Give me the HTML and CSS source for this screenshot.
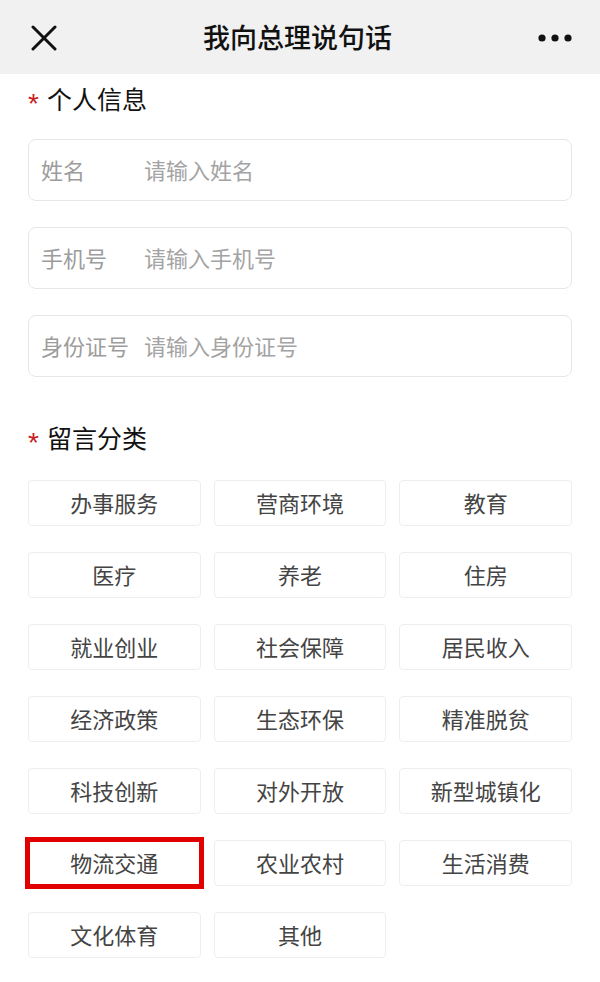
FILE: index.html
```html
<!DOCTYPE html>
<html lang="zh-CN">
<head>
<meta charset="utf-8">
<title>我向总理说句话</title>
<link rel="stylesheet" href="styles.css">
</head>
<body>
<header class="topbar">
  <span class="icon-close">
    <svg width="26" height="26" viewBox="0 0 26 26"><path d="M2 2 L24 24 M24 2 L2 24" stroke="#111" stroke-width="3" stroke-linecap="round" fill="none"/></svg>
  </span>
  <h1 class="title">我向总理说句话</h1>
  <span class="icon-more">
    <svg width="34" height="8" viewBox="0 0 34 8"><circle cx="4" cy="4" r="3.6" fill="#111"/><circle cx="17" cy="4" r="3.6" fill="#111"/><circle cx="30" cy="4" r="3.6" fill="#111"/></svg>
  </span>
</header>
<main class="content">
  <h2 class="section-title first"><span class="req">*</span>个人信息</h2>
  <div class="fields">
    <div class="field"><span class="label">姓名</span><span class="ph">请输入姓名</span></div>
    <div class="field"><span class="label">手机号</span><span class="ph">请输入手机号</span></div>
    <div class="field"><span class="label">身份证号</span><span class="ph">请输入身份证号</span></div>
  </div>
  <h2 class="section-title second"><span class="req">*</span>留言分类</h2>
  <div class="cats">
    <div class="cat">办事服务</div>
    <div class="cat">营商环境</div>
    <div class="cat">教育</div>
    <div class="cat">医疗</div>
    <div class="cat">养老</div>
    <div class="cat">住房</div>
    <div class="cat">就业创业</div>
    <div class="cat">社会保障</div>
    <div class="cat">居民收入</div>
    <div class="cat">经济政策</div>
    <div class="cat">生态环保</div>
    <div class="cat">精准脱贫</div>
    <div class="cat">科技创新</div>
    <div class="cat">对外开放</div>
    <div class="cat">新型城镇化</div>
    <div class="cat marked">物流交通<span class="mark"></span></div>
    <div class="cat">农业农村</div>
    <div class="cat">生活消费</div>
    <div class="cat">文化体育</div>
    <div class="cat">其他</div>
  </div>
</main>
</body>
</html>
```
FILE: styles.css
```css
* { box-sizing: border-box; }
html, body { margin: 0; padding: 0; background: #fff; }
body {
  font-family: "Noto Sans CJK SC", "Noto Sans", sans-serif;
  color: #111;
  width: 600px;
}
.topbar {
  height: 74px;
  background: #f1f1f1;
  display: flex;
  align-items: center;
  padding: 0 28px 0 31px;
}
.icon-close { width: 26px; height: 26px; display: flex; margin-top: 2px; }
.icon-more { width: 34px; height: 8px; display: flex; margin-top: 2px; }
.title {
  flex: 1;
  margin: 0;
  text-align: center;
  font-size: 27px;
  font-weight: 500;
  line-height: 34px;
  color: #111;
}
.content { padding: 0 28px; }
.section-title {
  margin: 0;
  height: 34px;
  font-size: 25px;
  font-weight: 400;
  line-height: 34px;
  color: #111;
  display: flex;
  align-items: center;
}
.section-title.first { margin-top: 7px; }
.section-title.second { margin-top: 43px; }
.req {
  color: #c81e1e;
  font-family: "Liberation Sans", sans-serif;
  font-size: 28px;
  line-height: 28px;
  height: 40px;
  padding-top: 12px;
  width: 19px;
  flex: none;
}
.fields {
  margin-top: 24px;
  display: flex;
  flex-direction: column;
  gap: 26px;
}
.field {
  height: 62px;
  border: 1px solid #e6e6e6;
  border-radius: 8px;
  display: flex;
  align-items: center;
  padding: 0 0 3px 12px;
  font-size: 22px;
  color: #9c9c9c;
}
.label { width: 103px; flex: none; }
.ph { color: #a3a3a3; }
.cats {
  margin-top: 26px;
  display: grid;
  grid-template-columns: repeat(3, 1fr);
  gap: 26px 13px;
}
.cat {
  position: relative;
  height: 46px;
  border: 1px solid #eeeeee;
  border-radius: 4px;
  display: flex;
  align-items: center;
  justify-content: center;
  padding-bottom: 3px;
  font-size: 22px;
  color: #444;
}
.mark {
  position: absolute;
  top: -4px;
  bottom: -4px;
  left: -4px;
  right: -4px;
  border: 5px solid #e00000;
}
```
